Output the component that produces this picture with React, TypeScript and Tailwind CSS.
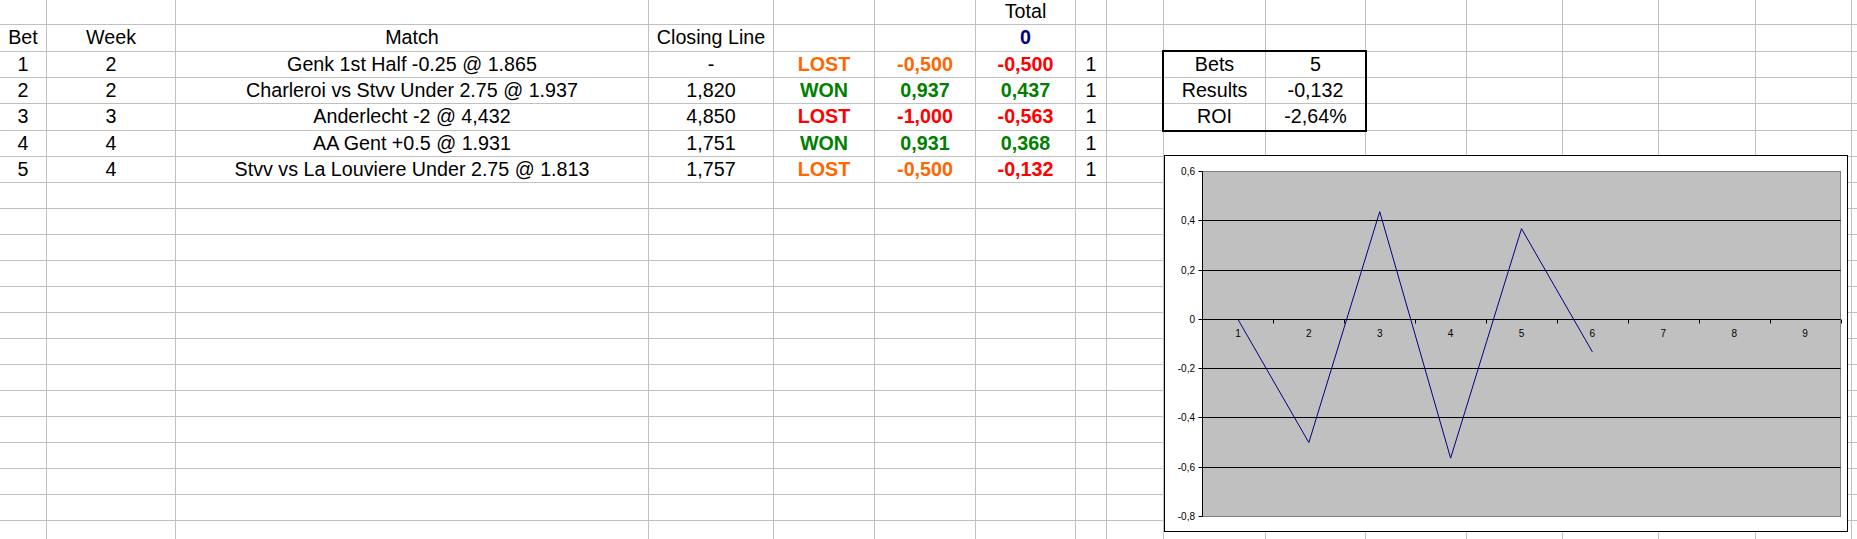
import React from 'react';

type Cell = { text: string; cls?: string } | string | null;

// column widths incl. the 1px right gridline
const COLS = [
  'w-[47px]',
  'w-[129px]',
  'w-[473px]',
  'w-[125px]',
  'w-[101px]',
  'w-[101px]',
  'w-[100px]',
  'w-[31px]',
  'w-[57px]',
  'w-[102px]',
  'w-[100px]',
  'w-[101px]',
  'w-[96px]',
  'w-[96px]',
  'w-[97px]',
  'w-[96px]',
  'w-[10px]',
];

const ORANGE = 'font-bold text-[#ff6600]';
const RED = 'font-bold text-[#ff0000]';
const GREEN = 'font-bold text-[#008000]';

const DATA: Cell[][] = [
  [null, null, null, null, null, null, 'Total'],
  ['Bet', 'Week', 'Match', 'Closing Line', null, null, { text: '0', cls: 'font-bold text-[#000080]' }],
  [
    '1', '2', 'Genk 1st Half -0.25 @ 1.865', '-',
    { text: 'LOST', cls: ORANGE }, { text: '-0,500', cls: ORANGE }, { text: '-0,500', cls: RED },
    '1', null, 'Bets', '5',
  ],
  [
    '2', '2', 'Charleroi vs Stvv Under 2.75 @ 1.937', '1,820',
    { text: 'WON', cls: GREEN }, { text: '0,937', cls: GREEN }, { text: '0,437', cls: GREEN },
    '1', null, 'Results', '-0,132',
  ],
  [
    '3', '3', 'Anderlecht -2 @ 4,432', '4,850',
    { text: 'LOST', cls: RED }, { text: '-1,000', cls: RED }, { text: '-0,563', cls: RED },
    '1', null, 'ROI', '-2,64%',
  ],
  [
    '4', '4', 'AA Gent +0.5 @ 1.931', '1,751',
    { text: 'WON', cls: GREEN }, { text: '0,931', cls: GREEN }, { text: '0,368', cls: GREEN },
    '1',
  ],
  [
    '5', '4', 'Stvv vs La Louviere Under 2.75 @ 1.813', '1,757',
    { text: 'LOST', cls: ORANGE }, { text: '-0,500', cls: ORANGE }, { text: '-0,132', cls: RED },
    '1',
  ],
];

const ROW_H = ['h-[25px]', 'h-[27px]', 'h-[26px]', 'h-[26px]', 'h-[27px]'];
const ROW_COUNT = 22;

function Chart() {
  const left = 37.5;
  const right = 675.5;
  const top = 15.5;
  const bottom = 360.5;
  const perUnit = (bottom - top) / 1.4;
  const y = (v: number) => Math.round(15 + (0.6 - v) * perUnit) + 0.5;
  const catW = (right - left) / 9;
  const cx = (i: number) => left + (i - 0.5) * catW;

  const ticks = [0.6, 0.4, 0.2, 0, -0.2, -0.4, -0.6, -0.8];
  const values = [0, -0.5, 0.437, -0.563, 0.368, -0.132];
  const points = values.map((v, i) => `${cx(i + 1)},${15 + (0.6 - v) * perUnit + 0.5}`).join(' ');
  const y0 = y(0);
  const label = (t: number) => (Math.abs(t) < 0.001 ? '0' : t.toFixed(1).replace('.', ','));

  return (
    <div className="absolute left-[1164px] top-[155px] h-[377px] w-[684px] border border-black bg-white">
      <svg width="682" height="375" className="block">
        <rect x={left} y={top} width={right - left} height={bottom - top} fill="#c0c0c0" stroke="#808080" />
        {ticks.slice(1, -1).map((t) => (
          <line key={t} x1={left} x2={right} y1={y(t)} y2={y(t)} stroke="#000" />
        ))}
        <line x1={left} x2={left} y1={top} y2={bottom} stroke="#000" />
        {ticks.map((t) => (
          <g key={`t${t}`}>
            <line x1={left - 4} x2={left} y1={y(t)} y2={y(t)} stroke="#000" />
            <text
              x={30}
              y={y(t) + 3.5}
              textAnchor="end"
              fontSize="10"
              fontFamily="'Liberation Sans', Arial, sans-serif"
              fill="#000"
            >
              {label(t)}
            </text>
          </g>
        ))}
        {Array.from({ length: 9 }, (_, k) => (
          <line
            key={`x${k}`}
            x1={Math.round(left + (k + 1) * catW) + 0.5}
            x2={Math.round(left + (k + 1) * catW) + 0.5}
            y1={y0}
            y2={y0 + 4}
            stroke="#000"
          />
        ))}
        {Array.from({ length: 9 }, (_, k) => (
          <text
            key={`l${k}`}
            x={cx(k + 1)}
            y={180.5}
            textAnchor="middle"
            fontSize="10"
            fontFamily="'Liberation Sans', Arial, sans-serif"
            fill="#000"
          >
            {k + 1}
          </text>
        ))}
        <polyline points={points} fill="none" stroke="#000080" strokeWidth="1" />
      </svg>
    </div>
  );
}

export default function App() {
  return (
    <div className="relative h-[539px] w-[1857px] overflow-hidden bg-white font-['Liberation_Sans',Arial,sans-serif] text-[19.7px] text-black">
      <div className="flex flex-col">
        {Array.from({ length: ROW_COUNT }, (_, r) => {
          const row = DATA[r] ?? [];
          return (
            <div key={r} className={`flex shrink-0 ${ROW_H[r] ?? 'h-[26px]'}`}>
              {COLS.map((w, c) => {
                const cell = row[c];
                const text = cell == null ? '' : typeof cell === 'string' ? cell : cell.text;
                const cls = cell != null && typeof cell !== 'string' ? cell.cls ?? '' : '';
                return (
                  <div
                    key={c}
                    className={`${w} flex shrink-0 items-center justify-center overflow-visible whitespace-nowrap border-r border-b border-[#c0c0c0] ${cls}`}
                  >
                    {text}
                  </div>
                );
              })}
            </div>
          );
        })}
      </div>

      {/* summary box border */}
      <div className="pointer-events-none absolute left-[1162px] top-[50px] h-[82px] w-[205px] border-2 border-black" />

      <Chart />
    </div>
  );
}
